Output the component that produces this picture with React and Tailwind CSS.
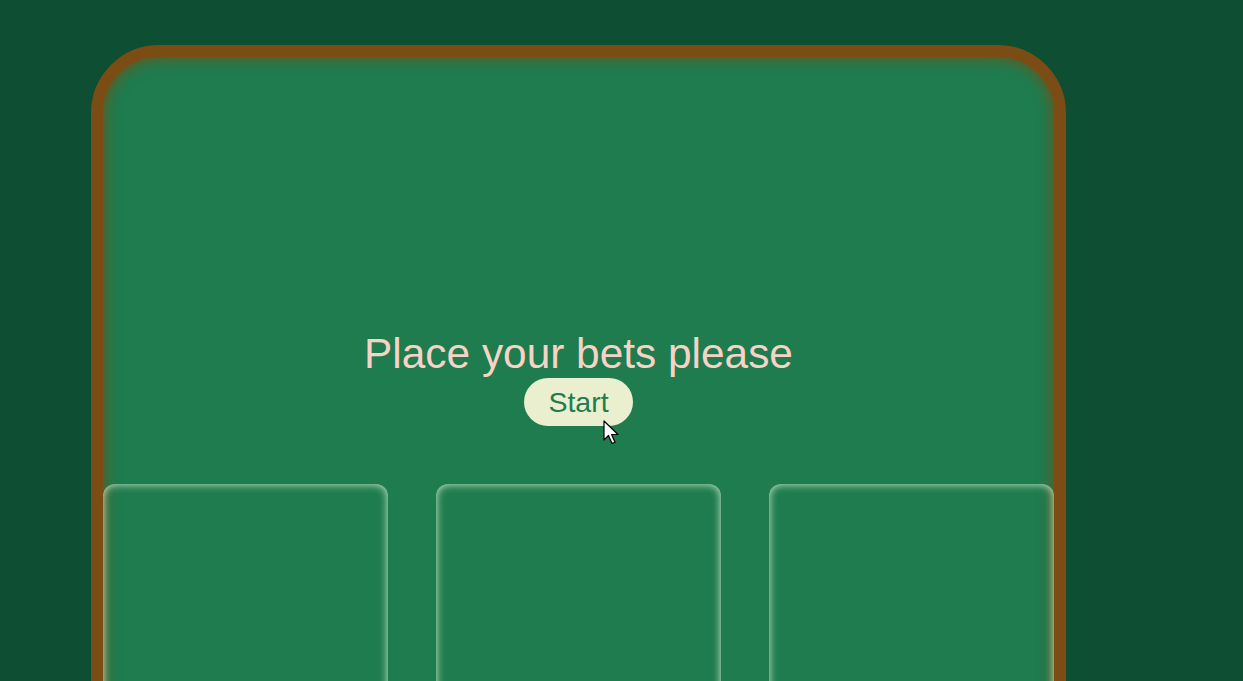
import React from "react";

const CARDS = [0, 1, 2];

export default function App() {
  return (
    <div className="relative min-h-[681px] h-[681px] overflow-hidden bg-[#0e4e32] font-['Liberation_Sans',Arial,sans-serif]">
      <div className="ml-[91px] mt-[45px] w-[975px] h-[760px] rounded-[68px] border-[12px] border-[#7b4c13] bg-[#1e7c4f] shadow-[inset_0_0_16px_#7b4c13] flex flex-col">
        <div className="flex flex-col items-center pt-[273px]">
          <h1 className="text-[42.4px] leading-[48px] text-[#f6d3c6]">Place your bets please</h1>
          <button className="rounded-full bg-[#eaf0cf] px-6 h-12 text-[28.5px] text-[#1e7c4f]">Start</button>
        </div>
        <div className="mt-[58px] flex justify-between">
          {CARDS.map(c => (
            <div
              key={c}
              className="w-[285px] h-[300px] rounded-xl shadow-[inset_0_0_8px_#d8f2d0]"
            />
          ))}
        </div>
      </div>
      {/* mouse pointer */}
      <svg className="absolute left-[603px] top-[420px]" width="20" height="28" viewBox="0 0 20 28">
        <path d="M1 1 L1 20 L5.5 15.5 L9 23.5 L12 22.2 L8.6 14.5 L15 14.5 Z" fill="white" stroke="black" strokeWidth="1.2" strokeLinejoin="round" />
      </svg>
    </div>
  );
}
